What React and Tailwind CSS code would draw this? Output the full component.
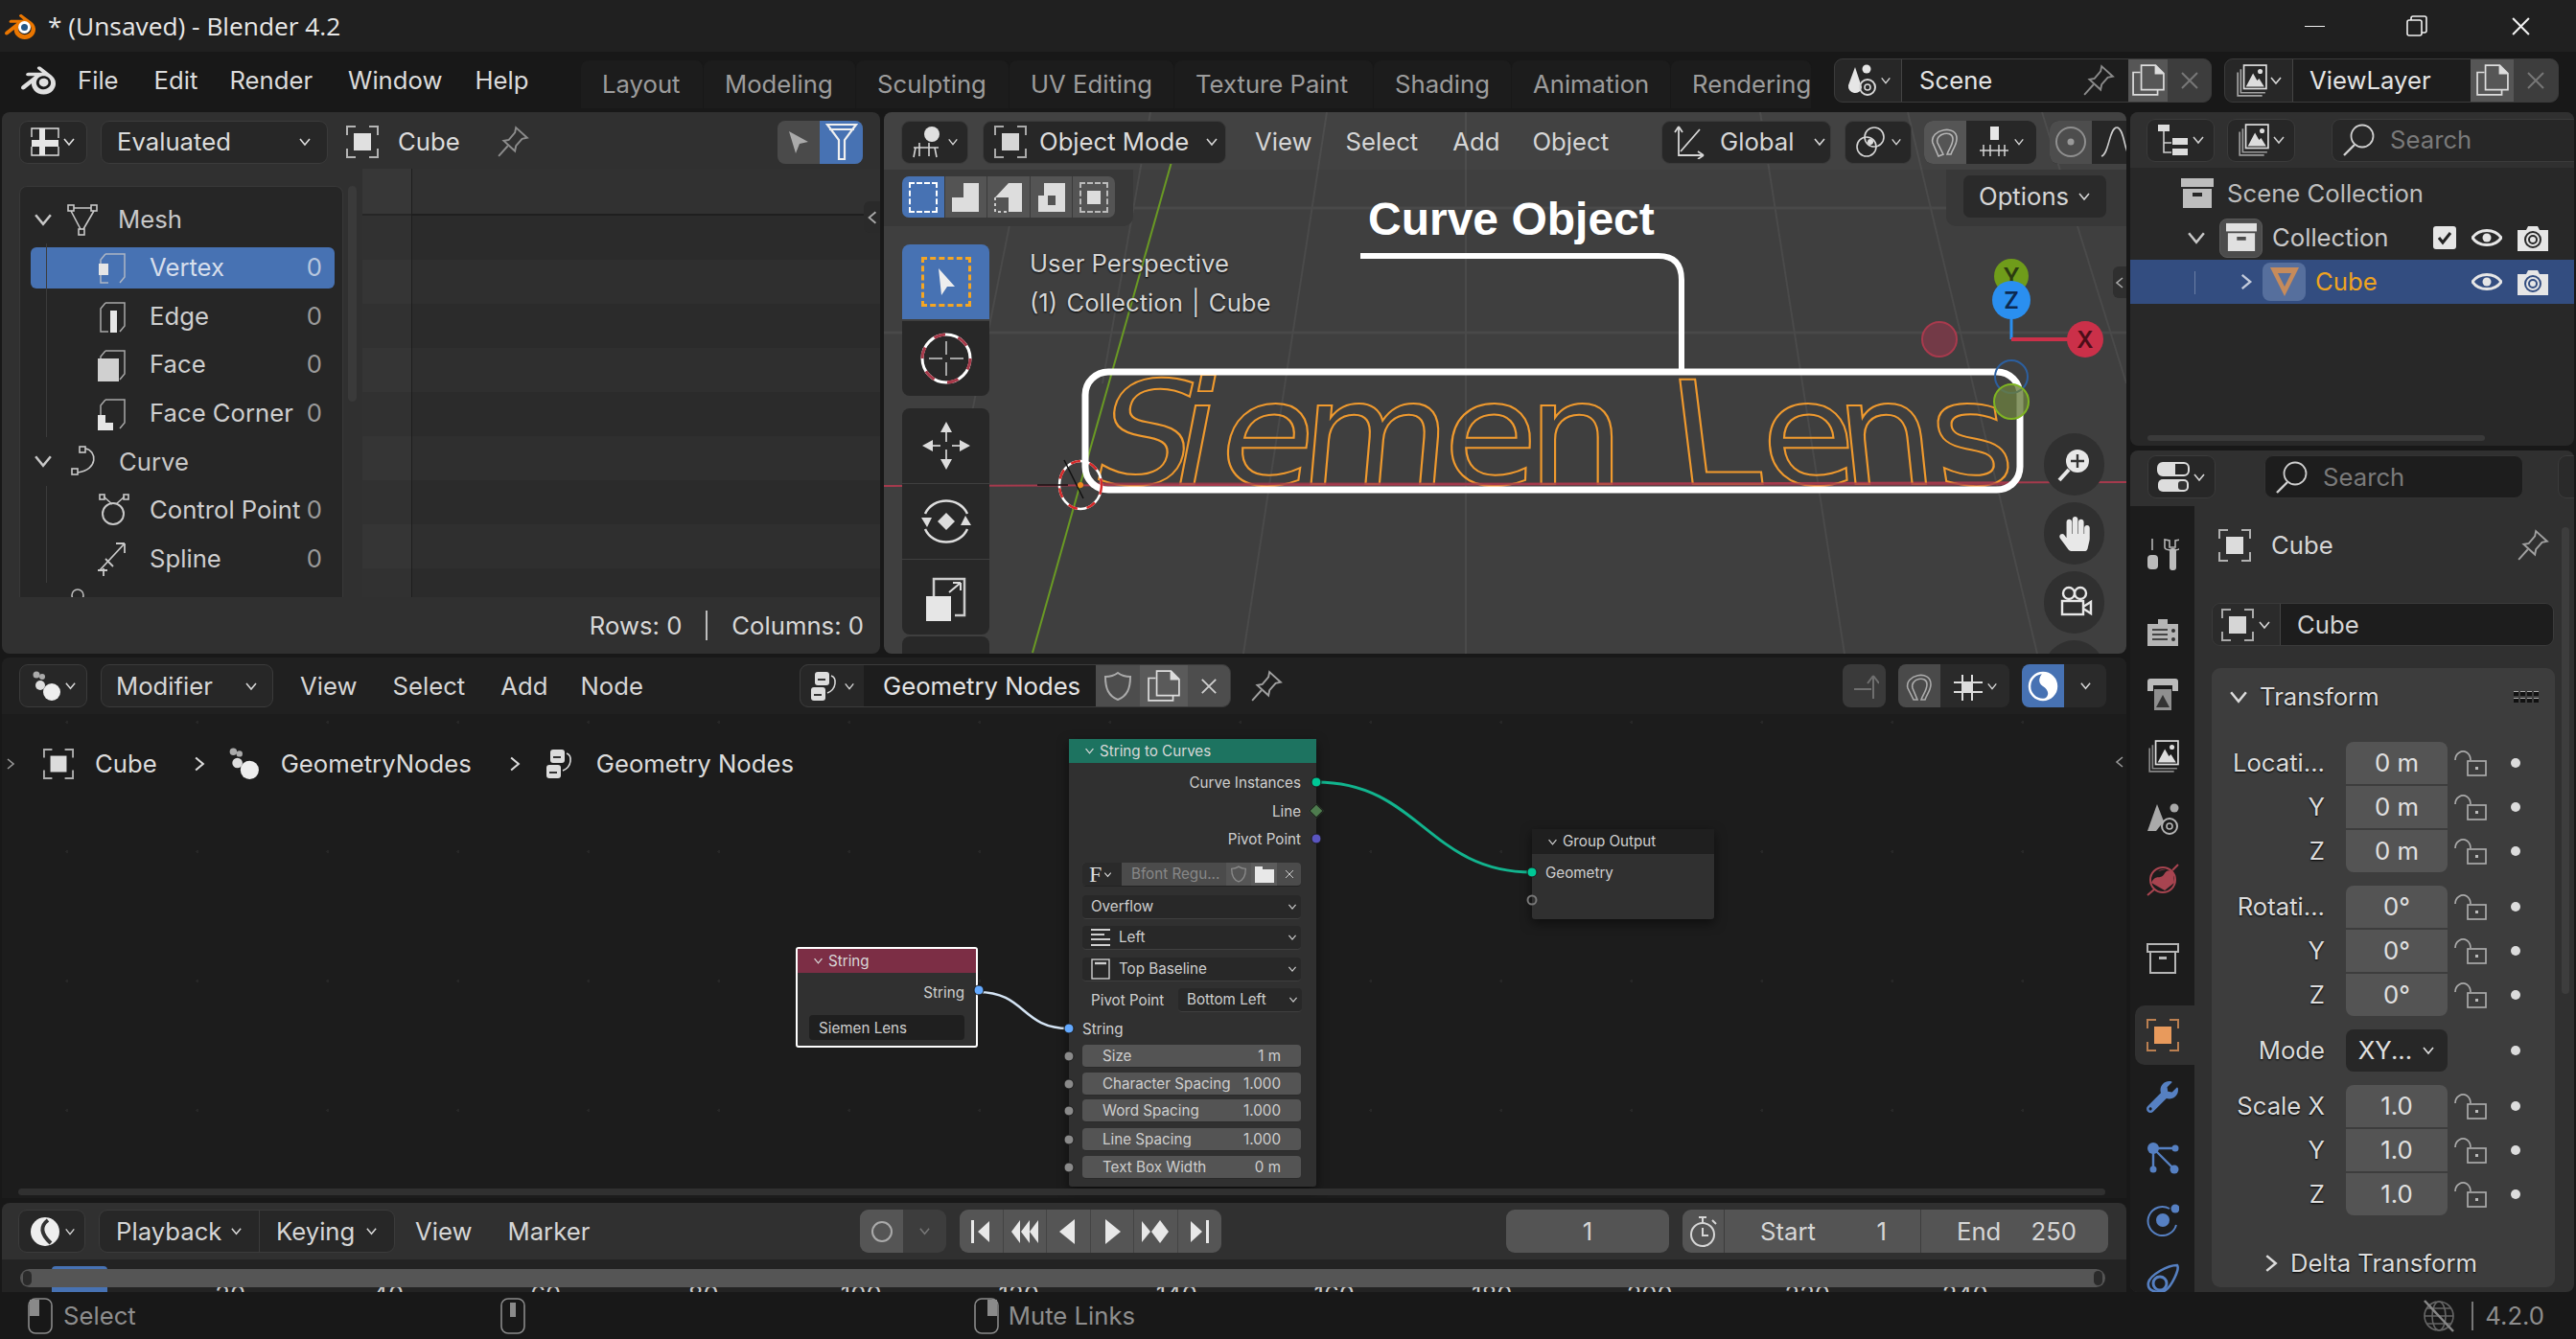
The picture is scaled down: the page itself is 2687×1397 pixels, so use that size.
import React from "react";
import { SiBlender } from "react-icons/si";
import { FaHandPaper, FaWrench } from "react-icons/fa";

const Chev = ({ dir = "down", s = 14, cls = "" }) => {
  const d = { down: "M2 4l5 6 5-6", right: "M4 2l6 5-6 5", left: "M10 2l-6 5 6 5" }[dir];
  return (
    <svg viewBox="0 0 14 14" width={s} height={s} className={"shrink-0 " + cls}>
      <path d={d} fill="none" stroke="currentColor" strokeWidth="1.6" />
    </svg>
  );
};

const I = ({ s = 32, w, h, children, cls = "", vb = "0 0 32 32" }) => (
  <svg viewBox={vb} width={w || s} height={h || s} className={"shrink-0 " + cls} fill="none" stroke="currentColor" strokeWidth="1.6">
    {children}
  </svg>
);

const ObjIcon = ({ s = 34, cls = "" }) => (
  <I s={s} vb="0 0 34 34" cls={cls}>
    <path d="M1 10V1h9M24 1h9v9M33 24v9h-9M10 33H1v-9" strokeWidth="2" opacity=".75" />
    <rect x="8" y="8" width="18" height="18" fill="currentColor" stroke="none" />
  </I>
);
const PinIcon = ({ s = 34, cls = "" }) => (
  <I s={s} cls={cls} vb="0 0 32 32">
    <path d="M19 2l11 10-5 1-6 7-1 5-11-10 5-1 6-7zM11 20L2 30" strokeWidth="1.8" />
  </I>
);
const SheetIcon = () => (
  <I s={30} vb="0 0 30 30">
    <path d="M1 10V1h28v10M1 20v9h28v-9" strokeWidth="1.4" />
    <rect x="1" y="13" width="28" height="7" fill="#e6e6e6" stroke="none" />
    <rect x="9" y="1" width="6" height="28" fill="#e6e6e6" stroke="none" />
  </I>
);
const Nodes3 = ({ s = 32 }) => (
  <I s={s}>
    <circle cx="6" cy="4" r="3.5" fill="#aaa" stroke="none" />
    <circle cx="12" cy="6" r="3" fill="#aaa" stroke="none" />
    <circle cx="10" cy="15" r="5" fill="#ddd" stroke="none" />
    <circle cx="22" cy="22" r="9" fill="#eee" stroke="none" />
  </I>
);
const NodeTree = () => (
  <I s={32}>
    <rect x="5" y="1" width="15" height="14" rx="3" fill="#ddd" stroke="none" />
    <rect x="1" y="17" width="15" height="14" rx="3" fill="#ddd" stroke="none" />
    <path d="M8 9h8M4 25h8" stroke="#333" strokeWidth="2" />
    <path d="M22 5c6 2 6 14-4 18" />
  </I>
);
const Picture = ({ s = 32 }) => (
  <I s={s}>
    <path d="M3 8v23h24M6 5v23h24" opacity=".7" />
    <rect x="9" y="1" width="22" height="23" stroke="#ddd" />
    <path d="M11 22l7-13 4 7 2-2 5 8z" fill="#ddd" stroke="none" />
    <circle cx="25" cy="7" r="2.4" fill="#ddd" stroke="none" />
  </I>
);
const CopyI = () => (
  <I s={34}>
    <path d="M8 8H1v22h24v-5" />
    <path d="M9 1h14l8 8v16H9z" fill="none" />
    <path d="M23 1v8h8" fill="currentColor" />
  </I>
);
const X = ({ s = 20, cls = "" }) => (
  <I s={s} vb="0 0 20 20" cls={cls}><path d="M2 2l16 16M18 2L2 18" strokeWidth="2" /></I>
);
const SearchI = ({ s = 34 }) => (
  <I s={s} vb="0 0 34 34">
    <circle cx="21" cy="13" r="11.5" strokeWidth="1.8" />
    <path d="M13 22L2 33" strokeWidth="2.4" />
  </I>
);
const Box = ({ s = 34, outline = false }) => (
  <I s={s} vb="0 0 34 32">
    {outline ? (
      <>
        <rect x="1" y="1" width="32" height="8" strokeWidth="2" />
        <path d="M4 9v22h26V9" strokeWidth="2" />
        <rect x="13" y="14" width="8" height="3" fill="currentColor" stroke="none" />
      </>
    ) : (
      <>
        <rect x="0" y="0" width="34" height="9" fill="currentColor" stroke="none" />
        <path fillRule="evenodd" d="M2 11h30v20H2zM12 15v4h10v-4z" fill="currentColor" stroke="none" />
      </>
    )}
  </I>
);
const Eye = () => (
  <I w={32} h={22} vb="0 0 32 22">
    <path d="M1 11C8 1 24 1 31 11 24 21 8 21 1 11z" strokeWidth="3" stroke="#e6e6e6" />
    <circle cx="16" cy="11" r="4.5" fill="#e6e6e6" stroke="none" />
  </I>
);
const Cam = ({ ring = "#282828" }) => (
  <I w={32} h={27} vb="0 0 32 27">
    <path d="M0 5h9l2-4h10l2 4h9v22H0z" fill="#e6e6e6" stroke="none" />
    <circle cx="16" cy="15" r="8" stroke={ring} strokeWidth="2" />
    <circle cx="16" cy="15" r="4" stroke={ring} strokeWidth="2" />
  </I>
);
const Lock = () => (
  <I w={34} h={27} vb="0 0 34 27">
    <path d="M1 10C1 3 8-1 13 2c3 2 4 4 4 8" stroke="#aaa" strokeWidth="1.7" />
    <rect x="14" y="11" width="19" height="15" stroke="#aaa" strokeWidth="1.7" />
    <rect x="22" y="17" width="3" height="3" fill="#bbb" stroke="none" />
  </I>
);
const MeshI = () => (
  <I s={34} vb="0 0 34 34">
    <rect x="2" y="2" width="6" height="6" />
    <rect x="26" y="2" width="6" height="6" />
    <rect x="13" y="27" width="6" height="6" />
    <path d="M8 5h18M5 8l10 19M29 8L18 27" />
  </I>
);
const CurveI = () => (
  <I s={32}>
    <rect x="9" y="1" width="6" height="6" />
    <rect x="1" y="24" width="6" height="6" />
    <path d="M15 3c12 2 14 22-8 25" />
  </I>
);
const Attr = ({ k }) => (
  <I s={36} vb="0 0 36 36" cls="text-[#c8c8c8]">
    {k === "ctrl" ? (
      <>
        <circle cx="18" cy="22" r="11" strokeWidth="2" />
        <path d="M8 4l9 8M30 4l-9 8" strokeWidth="1.5" />
        <rect x="4" y="2" width="5" height="5" />
        <rect x="29" y="2" width="5" height="5" />
      </>
    ) : k === "spline" ? (
      <path d="M4 30l26-28M30 2v10M30 2h-9M2 30h10M8 36v-8M10 18l8 8" strokeWidth="1.8" />
    ) : (
      <>
        <path d="M10 4h20v24l-5 6M10 4L5 10v24h8" strokeWidth="1.5" opacity=".8" />
        {k === "v" && <rect x="3" y="14" width="10" height="12" fill="#e6e6e6" stroke="none" />}
        {k === "e" && <rect x="15" y="12" width="7" height="23" fill="#e6e6e6" stroke="none" />}
        {k === "f" && <rect x="2" y="12" width="22" height="24" fill="#d0d0d0" stroke="none" />}
        {k === "c" && <path d="M2 20h8v8h8v8H2z" fill="#e6e6e6" stroke="none" />}
      </>
    )}
  </I>
);

const Btn = ({ children, cls = "" }) => (
  <div className={"flex shrink-0 items-center justify-center gap-[3px] h-[45px] rounded-[9px] bg-[#272727] border border-[#3b3b3b] " + cls}>{children}</div>
);

const Menu = ({ items, cls = "" }) => (
  <div className={"flex items-center shrink-0 " + cls}>
    {items.map(([t, ml]) => (
      <span key={t} style={{ marginLeft: ml }}>{t}</span>
    ))}
  </div>
);

const AttrRow = ({ k, label, n = "0", active }) => (
  <div className={"relative flex items-center h-[43px] mb-[7.6px] ml-[11px] w-[317px] rounded-[6px] " + (active ? "bg-[#4772b3]" : "")}>
    <div className="absolute left-[16px] -top-[4px] -bottom-[4px] w-px bg-[#3c3c3c]" />
    <div className="ml-[68px] w-[56px] shrink-0"><Attr k={k} /></div>
    <span className={"whitespace-nowrap " + (active ? "text-[#d6deec]" : "text-[#cfcfcf]")}>{label}</span>
    <span className={"ml-auto mr-[13px] " + (active ? "text-[#b8c7de]" : "text-[#9a9a9a]")}>{n}</span>
  </div>
);

function Spreadsheet() {
  return (
    <div className="w-[916px] h-[565px] rounded-[8px] bg-[#303030] flex flex-col overflow-hidden">
      <div className="h-[59px] flex items-center pl-[18px] pt-[3px] shrink-0">
        <Btn cls="w-[71px] text-[#e0e0e0]"><SheetIcon /><Chev s={14} /></Btn>
        <Btn cls="w-[237px] ml-[14px] !justify-between px-[16px] text-[#dcdcdc]"><span>Evaluated</span><Chev s={14} /></Btn>
        <ObjIcon cls="ml-[19px] text-[#e0e0e0]" />
        <span className="ml-[20px] text-[#dcdcdc]">Cube</span>
        <PinIcon cls="ml-[38px] text-[#8c8c8c]" />
        <div className="ml-auto mr-[18px] flex h-[45px] w-[89px] rounded-[8px] overflow-hidden bg-[#4a4a4a]">
          <div className="w-[44px] flex items-center justify-center">
            <I s={26} vb="0 0 26 26"><path d="M3 2l20 11-9 2-4 10z" fill="#aaa" stroke="none" /></I>
          </div>
          <div className="w-[45px] flex items-center justify-center bg-[#4772b3]">
            <I w={34} h={40} vb="0 0 34 40"><path d="M2 2h30L20 18v20h-6V18zM4 7h26" stroke="#f0f0f0" strokeWidth="2.2" /></I>
          </div>
        </div>
      </div>
      <div className="flex h-[447px] pl-[18px]">
        <div className="mt-[18px] w-[338px] shrink-0 rounded-t-[8px] bg-[#262626] border border-[#383838] border-b-0 overflow-hidden pt-[12px]">
          <div className="flex items-center h-[43px] mb-[7.6px] pl-[13px] text-[#c8c8c8]"><Chev s={22} /><span className="ml-[13px]"><MeshI /></span><span className="ml-[20px]">Mesh</span></div>
          <AttrRow k="v" label="Vertex" active />
          <AttrRow k="e" label="Edge" />
          <AttrRow k="f" label="Face" />
          <AttrRow k="c" label="Face Corner" />
          <div className="flex items-center h-[43px] mb-[7.6px] pl-[13px] text-[#c8c8c8]"><Chev s={22} /><span className="ml-[18px]"><CurveI /></span><span className="ml-[18px]">Curve</span></div>
          <AttrRow k="ctrl" label="Control Point" />
          <AttrRow k="spline" label="Spline" />
          <div className="ml-[52px] text-[#bbb]"><I s={16} vb="0 0 16 16"><circle cx="8" cy="9" r="6" /></I></div>
        </div>
        <div className="ml-[5px] mt-[18px] w-[9px] h-[225px] rounded-full bg-[#3a3a3a] shrink-0" />
        <div className="ml-[6px] flex-1 relative flex flex-col overflow-hidden">
          <div className="h-[49px] bg-[#313131] border-b-2 border-[#1f1f1f] shrink-0" />
          {[0, 1, 2, 3, 4, 5, 6, 7, 8].map((i) => (
            <div key={i} className={"h-[46px] shrink-0 " + (i % 2 ? "bg-[#2f2f2f]" : "bg-[#2b2b2b]")} />
          ))}
          <div className="absolute left-0 top-0 bottom-0 w-[52px] bg-[#ffffff08] border-r border-[#1e1e1e]" />
          <div className="absolute right-0 top-[34px] w-[17px] h-[33px] rounded-l-[6px] bg-[#2a2a2a] flex items-center justify-center text-[#aaa]"><Chev dir="left" s={16} /></div>
        </div>
      </div>
      <div className="h-[59px] flex items-center justify-end pr-[17px] text-[#d8d8d8] shrink-0">
        <span>Rows: 0</span>
        <div className="mx-[25px] w-[2px] h-[31px] bg-[#bcbcbc]" />
        <span>Columns: 0</span>
      </div>
    </div>
  );
}

const ToolBtn = ({ children, active, cls = "" }) => (
  <div className={"relative w-[91px] h-[78px] flex items-center justify-center " + (active ? "bg-[#4772b3] " : "bg-[#282828] ") + cls}>{children}</div>
);

const letters = [
  ["S", 1134, -13], ["i", 1216, -11], ["e", 1267, -8], ["m", 1353, -5], ["e", 1504, -2], ["n", 1593, 0],
  ["L", 1750, 7], ["e", 1840, 4], ["n", 1921, 6], ["s", 2022, 9],
];

const NavBtn = ({ children, cls = "" }) => (
  <div className={"w-[63px] h-[65px] rounded-full bg-[#303030] flex items-center justify-center text-[#e8e8e8] " + cls}>{children}</div>
);

function Viewport() {
  return (
    <div className="relative w-[1296px] h-[565px] rounded-[8px] bg-[#3f3f3f] overflow-hidden text-[#d6d6d6]">
      <svg viewBox="922 117 1296 565" className="absolute inset-0 w-full h-full">
        <g stroke="#4a4a4a" strokeWidth="2" fill="none">
          <path d="M922 217L2218 217M922 347L2218 347" stroke="#494949" strokeWidth="3" />
          <path d="M1529 117L1529 682M1836 117L1924 682M1990 117L2125 682M1384 117L1297 682M1060 200L1000 500M1200 117L1150 400M2130 117L2218 400" />
        </g>
        <path d="M922 507L2218 503" stroke="#a53a4d" strokeWidth="2" />
        <path d="M1222 169L1077 681" stroke="#6a9a24" strokeWidth="2" />
        {letters.map(([c, x, a], i) => (
          <text key={i} transform={`translate(${x} 505) skewX(${a}) scale(1.07 1)`} fontFamily="'DejaVu Sans',sans-serif" fontSize="150" fill="none" stroke="#f09a2e" strokeWidth="2">{c}</text>
        ))}
        <path d="M1140 505H2100" stroke="#a53a4d" strokeWidth="3" opacity=".8" />
        <rect x="1132" y="388" width="975" height="123" rx="24" fill="none" stroke="#fff" strokeWidth="7" />
        <path d="M1419 267H1730Q1754 267 1754 292V387" fill="none" stroke="#fff" strokeWidth="6" />
        <ellipse cx="1127" cy="506" rx="22" ry="25" fill="none" stroke="#fff" strokeWidth="2.5" />
        <ellipse cx="1127" cy="506" rx="22" ry="25" fill="none" stroke="#d62828" strokeWidth="2.5" strokeDasharray="10 10" />
        <path d="M1082 506h32M1110 480l20 40" stroke="#111" strokeWidth="1.5" />
        <circle cx="1127" cy="506" r="3" fill="#ee8a20" />
        <path d="M2098 330V354" stroke="#2a8ff0" strokeWidth="3" />
        <path d="M2098 354H2170" stroke="#cb3049" strokeWidth="4" />
        <ellipse cx="2098" cy="288" rx="18" ry="18" fill="#6f9c1a" />
        <text x="2098" y="297" textAnchor="middle" fontFamily="Inter" fontSize="24" fontWeight="600" fill="#2b3a10">Y</text>
        <circle cx="2098" cy="313" r="20" fill="#2a8ff0" />
        <text x="2098" y="322" textAnchor="middle" fontFamily="Inter" fontSize="24" fontWeight="600" fill="#0c2a52">Z</text>
        <circle cx="2175" cy="354" r="19" fill="#cb3049" />
        <text x="2175" y="363" textAnchor="middle" fontFamily="Inter" fontSize="24" fontWeight="600" fill="#4b0d18">X</text>
        <circle cx="2023" cy="354" r="18" fill="#733a47" stroke="#a93a4d" strokeWidth="2" />
        <circle cx="2098" cy="393" r="17" fill="none" stroke="#2c5f9f" strokeWidth="2" />
        <circle cx="2098" cy="419" r="18" fill="#6a7d40" fillOpacity=".8" stroke="#7fb522" strokeWidth="2" />
      </svg>

      <div className="relative flex items-center h-[60px] pl-[18px] pt-[2px] bg-[#ffffff05]">
        <Btn cls="w-[70px]">
          <I s={34} vb="0 0 34 34"><circle cx="21" cy="9" r="8" fill="#e0e0e0" stroke="none" /><path d="M2 23h26M4 23l-2 10M24 23l2 10M8 18v14M18 18v14" /></I><Chev s={12} />
        </Btn>
        <Btn cls="w-[254px] ml-[15px] !justify-start pl-[11px] gap-[13px]">
          <ObjIcon s={34} /><span className="whitespace-nowrap text-[#dcdcdc]">Object Mode</span><Chev s={14} cls="ml-[4px]" />
        </Btn>
        <Menu cls="ml-[30px] w-[424px]" items={[["View", 0], ["Select", 35], ["Add", 36], ["Object", 34]]} />
        <Btn cls="w-[177px] !justify-start pl-[10px] gap-[14px]">
          <I s={36} vb="0 0 36 36"><path d="M7 2v30h26M7 2L3 8M7 2l4 6M29 5L9 28M33 32l-6-4M33 32l-6 4" strokeWidth="1.8" /></I><span>Global</span><Chev s={14} cls="ml-[6px]" />
        </Btn>
        <Btn cls="w-[70px] ml-[14px]">
          <I s={34} vb="0 0 34 34"><circle cx="20" cy="12" r="10" /><circle cx="12" cy="22" r="10" /><circle cx="16" cy="17" r="3" fill="#e0e0e0" stroke="none" /></I><Chev s={12} />
        </Btn>
        <div className="ml-[13px] flex w-[117px] h-[45px] rounded-[9px] overflow-hidden bg-[#272727] shrink-0">
          <div className="w-[44px] bg-[#555] flex items-center justify-center text-[#b5b5b5]"><I s={34} vb="0 0 34 34"><path d="M10 32L4 18C0 4 30-2 29 14c0 6-4 10-6 16h-4c2-6 6-10 6-16C25 4 6 8 9 18l6 12z" strokeWidth="1.6" /></I></div>
          <div className="flex-1 flex items-center justify-center gap-[3px]"><I s={34} vb="0 0 34 34"><rect x="13" y="1" width="9" height="14" fill="#e6e6e6" stroke="none" /><path d="M2 26h30M6 20v12M13 20v12M22 20v12M28 20v12" strokeWidth="1.5" /></I><Chev s={12} /></div>
        </div>
        <div className="ml-[14px] flex w-[100px] h-[45px] rounded-[9px] overflow-hidden shrink-0 bg-[#272727]">
          <div className="w-[44px] bg-[#4d4d4d] flex items-center justify-center text-[#8f8f8f]"><I s={34} vb="0 0 34 34"><circle cx="17" cy="17" r="15" strokeWidth="2" /><circle cx="17" cy="17" r="3.5" fill="#999" stroke="none" /></I></div>
          <div className="flex-1 flex items-center pl-[6px] text-[#ccc]"><I s={34} vb="0 0 34 34"><path d="M4 32C12 30 12 2 20 2s8 28 14 30" /></I></div>
        </div>
      </div>

      <div className="absolute left-0 top-[60px] w-[260px] h-[59px] rounded-br-[10px] bg-[#383838]" />
      <div className="absolute right-0 top-[60px] w-[188px] h-[59px] rounded-bl-[10px] bg-[#383838]" />
      <div className="absolute left-[19px] top-[67px] flex h-[43px] w-[222px] rounded-[7px] overflow-hidden gap-px bg-[#3a3a3a]">
        <div className="flex-1 bg-[#4772b3] flex items-center justify-center"><div className="w-[30px] h-[32px] border-2 border-dashed border-white" /></div>
        <div className="flex-1 bg-[#545454] flex items-center justify-center"><I s={32}><path d="M2 31V16h12V1h16v30z" fill="#ddd" stroke="none" /></I></div>
        <div className="flex-1 bg-[#545454] flex items-center justify-center"><I s={32}><path d="M16 1h14v30H16V16H2" fill="#ddd" stroke="none" /><path d="M2 16v15h14" strokeDasharray="3 3" strokeWidth="2" stroke="#ccc" /></I></div>
        <div className="flex-1 bg-[#545454] flex items-center justify-center"><I s={32}><path fillRule="evenodd" d="M8 1h22v30H2V14h6zM12 14v10h8V14z" fill="#ddd" stroke="none" /></I></div>
        <div className="flex-1 bg-[#545454] flex items-center justify-center"><div className="w-[30px] h-[32px] border-2 border-dashed border-[#bbb] flex items-center justify-center"><div className="w-[14px] h-[14px] bg-[#ddd]" /></div></div>
      </div>
      <div className="absolute right-[21px] top-[66px] w-[149px] h-[44px] rounded-[7px] bg-[#2a2a2a] flex items-center justify-between px-[16px]"><span>Options</span><Chev s={14} /></div>

      <div className="absolute left-[19px] top-[138px] flex flex-col items-center">
        <ToolBtn active cls="rounded-t-[8px]">
          <div className="w-[52px] h-[52px] border-[3px] border-dashed border-[#f5a623] flex items-center justify-center"><I w={22} h={30} vb="0 0 22 30"><path d="M3 1l17 19-8 0-6 9z" fill="#eee" stroke="none" /></I></div>
        </ToolBtn>
        <ToolBtn cls="rounded-b-[8px] mt-[2px]">
          <I s={56} vb="0 0 56 56"><circle cx="28" cy="28" r="25" stroke="#fff" strokeWidth="3" /><circle cx="28" cy="28" r="25" stroke="#a83a4a" strokeWidth="3" strokeDasharray="12 14" /><path d="M28 10v14M28 32v14M10 28h14M32 28h14" stroke="#ccc" strokeWidth="1.5" /></I>
        </ToolBtn>
        <ToolBtn cls="rounded-t-[8px] mt-[13px]">
          <I s={54} vb="0 0 54 54"><path d="M27 2l6 11H21zM27 52l6-11H21zM2 27l11-6v12zM52 27l-11-6v12z" fill="#ddd" stroke="none" /><path d="M27 13v10M27 31v10M13 27h8M33 27h8" stroke="#bbb" strokeWidth="2" /></I>
        </ToolBtn>
        <ToolBtn cls="mt-px">
          <I s={56} vb="0 0 56 56"><path d="M6 20C14 2 42 2 50 20M50 36C42 54 14 54 6 36" stroke="#ddd" strokeWidth="2.5" /><path d="M28 19l9 9-9 9-9-9z" fill="#ddd" stroke="none" /><path d="M2 24h11l-5 10zM54 32H43l5-10z" fill="#ddd" stroke="none" /></I>
        </ToolBtn>
        <ToolBtn cls="mt-px rounded-b-[8px]">
          <I s={50} vb="0 0 50 50"><path d="M12 24V6h32v38H34" stroke="#ccc" strokeWidth="2.5" /><rect x="4" y="24" width="26" height="26" fill="#e6e6e6" stroke="none" /><path d="M28 20l12-10M40 10v8M40 10h-8" stroke="#ddd" strokeWidth="2" /></I>
        </ToolBtn>
        <ToolBtn cls="mt-[2px] rounded-t-[8px] !h-[30px]" />
      </div>

      <div className="absolute left-[152px] top-[141px] leading-[34px] [text-shadow:0_1px_2px_#000] whitespace-nowrap">User Perspective</div>
      <div className="absolute left-[152px] top-[182px] leading-[34px] [text-shadow:0_1px_2px_#000] whitespace-nowrap [word-spacing:2px]">(1) Collection | Cube</div>
      <div className="absolute left-[505px] top-[84px] text-[48px] leading-[56px] font-bold text-white font-['Liberation_Sans',sans-serif] whitespace-nowrap">Curve Object</div>

      <div className="absolute right-0 top-[161px] w-[14px] h-[33px] rounded-l-[6px] bg-[#2f2f2f] flex items-center justify-center text-[#aaa]"><Chev dir="left" s={14} /></div>

      <div className="absolute left-[1210px] top-[335px] flex flex-col gap-[7px]">
        <NavBtn><I s={36} vb="0 0 36 36"><circle cx="21" cy="14" r="12" fill="#e8e8e8" stroke="none" /><path d="M21 7v14M14 14h14" stroke="#333" strokeWidth="2.4" /><path d="M12 23L2 34" strokeWidth="4" stroke="#e8e8e8" /></I></NavBtn>
        <NavBtn><FaHandPaper size={36} /></NavBtn>
        <NavBtn><I s={40} vb="0 0 40 40"><circle cx="14" cy="10" r="6" strokeWidth="2.4" /><circle cx="26" cy="10" r="6" strokeWidth="2.4" /><rect x="7" y="18" width="22" height="14" strokeWidth="2.4" /><path d="M29 24l8-5v12l-8-5" strokeWidth="2.4" /></I></NavBtn>
        <NavBtn />
      </div>
    </div>
  );
}

const Sock = ({ c, x, y, hollow, diamond }) => (
  <div
    className={"absolute w-[11px] h-[11px] -translate-x-1/2 -translate-y-1/2 " + (diamond ? "rotate-45 " : "rounded-full ")}
    style={{ left: x, top: y, background: hollow ? "transparent" : c, border: hollow ? "2px solid #777" : "1px solid #1b1b1b" }}
  />
);

const NodeRowField = ({ label, v, top }) => (
  <div className="absolute left-[14px] w-[228px] h-[24px] rounded-[4px] bg-[#545454] border-b border-[#2a2a2a] flex items-center justify-between px-[21px] text-[#cfcfcf] whitespace-nowrap" style={{ top }}>
    <span>{label}</span><span>{v}</span>
  </div>
);

const NodeDrop = ({ top, left = 14, w = 228, children }) => (
  <div className="absolute h-[25px] rounded-[4px] bg-[#282828] border-b border-[#3f3f3f] flex items-center justify-between pl-[9px] pr-[4px] text-[#cfcfcf] whitespace-nowrap" style={{ top, left, width: w }}>
    <span className="flex items-center gap-[9px]">{children}</span><Chev s={10} />
  </div>
);

function NodeEditor() {
  return (
    <div className="relative w-[2216px] h-[564px] mt-[4px] bg-[#1c1c1c] rounded-t-[8px] overflow-hidden text-[#d6d6d6] bg-[radial-gradient(#272727_1.5px,transparent_1.5px)] bg-[size:136px_135px]">
      <div className="relative flex items-center h-[59px] bg-[#202020] pl-[18px]">
        <Btn cls="w-[71px]"><Nodes3 /><Chev s={13} /></Btn>
        <Btn cls="w-[180px] ml-[14px] !justify-between px-[15px]"><span>Modifier</span><Chev s={14} /></Btn>
        <Menu cls="ml-[28px] w-[521px]" items={[["View", 0], ["Select", 37], ["Add", 37], ["Node", 34]]} />
        <div className="flex shrink-0 h-[45px] rounded-[9px] overflow-hidden bg-[#4d4d4d] border border-[#3b3b3b]">
          <div className="w-[66px] flex items-center justify-center gap-[3px] bg-[#272727]"><NodeTree /><Chev s={12} /></div>
          <div className="w-[242px] bg-[#1d1d1d] flex items-center pl-[20px] text-[#e4e4e4] whitespace-nowrap">Geometry Nodes</div>
          <div className="w-[46px] flex items-center justify-center text-[#aaa]"><I s={32}><path d="M16 2c4 3 8 4 13 4 0 12-3 20-13 24C6 26 3 18 3 6c5 0 9-1 13-4z" strokeWidth="2" /></I></div>
          <div className="w-[50px] flex items-center justify-center bg-[#5a5a5a] text-[#ddd]"><CopyI /></div>
          <div className="w-[44px] flex items-center justify-center text-[#d0d0d0]"><X s={18} /></div>
        </div>
        <PinIcon cls="ml-[20px] text-[#a0a0a0]" />
        <div className="ml-[584px] flex items-center shrink-0">
          <div className="w-[45px] h-[45px] rounded-[8px] bg-[#3a3a3a] flex items-center justify-center text-[#6f6f6f]"><I s={30} vb="0 0 30 30"><path d="M24 28V4M24 4l-6 8M24 4l6 8M4 18h18" strokeWidth="2" /></I></div>
          <div className="ml-[13px] w-[44px] h-[45px] rounded-l-[8px] bg-[#4a4a4a] flex items-center justify-center text-[#ababab]"><I s={32}><path d="M10 30L4 18C0 4 28-2 28 14c0 6-4 10-6 16h-4c2-6 6-10 6-16C24 4 6 8 9 18l5 12z" /></I></div>
          <div className="w-[72px] h-[45px] rounded-r-[8px] bg-[#2a2a2a] flex items-center justify-center gap-[3px]"><I s={32}><path d="M1 12h30M1 22h30M10 4v27M20 4v27" stroke="#ddd" strokeWidth="2" /><rect x="9" y="11" width="12" height="12" fill="#ddd" stroke="none" /></I><Chev s={12} /></div>
          <div className="ml-[13px] w-[44px] h-[45px] rounded-l-[8px] bg-[#4772b3] flex items-center justify-center"><I s={34} vb="0 0 34 34"><circle cx="17" cy="17" r="14" stroke="#fff" strokeWidth="2.5" /><path d="M17 3a14 14 0 0 1 0 28c8-4 6-10 0-14-6-4-4-10 0-14z" fill="#fff" stroke="none" /></I></div>
          <div className="w-[44px] h-[45px] rounded-r-[8px] bg-[#2a2a2a] flex items-center justify-center"><Chev s={13} /></div>
        </div>
      </div>

      <div className="absolute top-[95px] left-0 h-[32px] flex items-center text-[#dcdcdc] whitespace-nowrap">
        <Chev dir="right" s={14} cls="ml-[2px] text-[#999]" />
        <ObjIcon s={32} cls="ml-[27px]" />
        <span className="ml-[22px]">Cube</span>
        <Chev dir="right" s={18} cls="ml-[35px]" />
        <span className="ml-[20px]"><Nodes3 s={34} /></span>
        <span className="ml-[22px]">GeometryNodes</span>
        <Chev dir="right" s={18} cls="ml-[36px]" />
        <span className="ml-[23px]"><NodeTree /></span>
        <span className="ml-[21px]">Geometry Nodes</span>
      </div>
      <div className="absolute left-[2202px] top-[102px] text-[#999]"><Chev dir="left" s={14} /></div>

      <svg viewBox="2 686 2216 564" className="absolute inset-0 w-full h-full pointer-events-none">
        <path d="M1373 816C1480 816 1490 910 1598 910" fill="none" stroke="#12b48e" strokeWidth="3" />
        <path d="M1020 1035C1070 1035 1065 1073 1115 1073" fill="none" stroke="#d4e4f4" strokeWidth="2.5" />
      </svg>

      {/* String node */}
      <div className="absolute left-[828px] top-[302px] w-[190px] h-[105px] rounded-[3px] border-2 border-white bg-[#303030] text-[15.2px] leading-none overflow-visible">
        <div className="h-[25px] bg-[#7c2e45] flex items-center pl-[16px] gap-[5px] text-[#d8d8d8]"><Chev s={11} /><span>String</span></div>
        <div className="text-right pr-[12px] mt-[13px] text-[#cfcfcf]">String</div>
        <div className="mx-[12px] mt-[16px] h-[26px] rounded-[4px] bg-[#1f1f1f] flex items-center pl-[10px] text-[#cfcfcf]">Siemen Lens</div>
        <Sock c="#63a9ff" x={189} y={43} />
      </div>

      {/* String to Curves */}
      <div className="absolute left-[1113px] top-[85px] w-[258px] h-[467px] rounded-[3px] bg-[#303030] text-[15.2px] leading-none shadow-[0_4px_12px_#0008]">
        <div className="h-[25px] bg-[#1d7360] flex items-center pl-[16px] gap-[5px] text-[#d8d8d8]"><Chev s={11} /><span>String to Curves</span></div>
        <div className="absolute right-[16px] top-[38px] text-[#cfcfcf] whitespace-nowrap">Curve Instances</div>
        <div className="absolute right-[16px] top-[68px] text-[#cfcfcf]">Line</div>
        <div className="absolute right-[16px] top-[97px] text-[#cfcfcf] whitespace-nowrap">Pivot Point</div>
        <Sock c="#00c896" x={258} y={45} />
        <Sock c="#4e7c4e" x={258} y={75} diamond />
        <Sock c="#5a55c0" x={258} y={104} />
        <div className="absolute left-[14px] top-[129px] w-[228px] h-[25px] rounded-[4px] bg-[#4b4b4b] flex items-center overflow-hidden text-[#888] border-b border-[#222]">
          <div className="w-[41px] h-full bg-[#2a2a2a] flex items-center pl-[7px] gap-[2px] text-[#ddd]"><span className="font-['Liberation_Serif',serif] text-[24px]">F</span><Chev s={9} /></div>
          <div className="w-[109px] pl-[10px] whitespace-nowrap">Bfont Regu...</div>
          <div className="w-[26px] h-full flex items-center justify-center bg-[#555]"><I s={18} vb="0 0 32 32"><path d="M16 2c4 3 8 4 13 4 0 12-3 20-13 24C6 26 3 18 3 6c5 0 9-1 13-4z" strokeWidth="2.5" /></I></div>
          <div className="w-[27px] h-full flex items-center justify-center bg-[#5c5c5c] text-[#e8e8e8]"><I s={20} vb="0 0 20 20"><path d="M0 2h8v3h12v14H0z" fill="currentColor" stroke="none" /></I></div>
          <div className="flex-1 h-full flex items-center justify-center text-[#ccc]"><X s={10} /></div>
        </div>
        <NodeDrop top={163}>Overflow</NodeDrop>
        <NodeDrop top={195}><I w={20} h={20} vb="0 0 20 20"><path d="M0 2h20M0 7h14M0 12h20M0 18h20" strokeWidth="2" /></I>Left</NodeDrop>
        <NodeDrop top={228}><I w={20} h={22} vb="0 0 20 22"><rect x="1" y="1" width="18" height="20" strokeWidth="1.4" /><path d="M4 5h12" strokeWidth="2.4" /></I>Top Baseline</NodeDrop>
        <div className="absolute left-[23px] top-[253px] text-[#cfcfcf] leading-[40px] whitespace-nowrap">Pivot Point</div>
        <NodeDrop top={260} left={114} w={129}>Bottom Left</NodeDrop>
        <div className="absolute left-[14px] top-[295px] text-[#cfcfcf]">String</div>
        <Sock c="#63a9ff" x={0} y={302} />
        <NodeRowField label="Size" v="1 m" top={319} />
        <NodeRowField label="Character Spacing" v="1.000" top={348} />
        <NodeRowField label="Word Spacing" v="1.000" top={376} />
        <NodeRowField label="Line Spacing" v="1.000" top={406} />
        <NodeRowField label="Text Box Width" v="0 m" top={435} />
        {[331, 360, 388, 418, 447].map((y) => <Sock key={y} c="#8a8a8a" x={0} y={y} />)}
      </div>

      {/* Group Output */}
      <div className="absolute left-[1596px] top-[179px] w-[190px] h-[94px] rounded-[3px] bg-[#303030] text-[15.2px] leading-none shadow-[0_4px_12px_#0008]">
        <div className="h-[26px] bg-[#1f1f1f] flex items-center pl-[16px] gap-[5px] text-[#d0d0d0]"><Chev s={11} /><span>Group Output</span></div>
        <div className="pl-[14px] mt-[12px] text-[#cfcfcf]">Geometry</div>
        <Sock c="#00c896" x={0} y={45} />
        <Sock hollow x={0} y={74} />
      </div>

      <div className="absolute left-[17px] top-[554px] w-[2177px] h-[7px] rounded-full bg-[#303030]" />
    </div>
  );
}

const Transport = ({ d }) => (
  <div className="w-[45.5px] h-full flex items-center justify-center border-r border-[#444] last:border-0">
    <I s={30} vb="0 0 30 30"><path d={d} fill="#e8e8e8" stroke="none" /></I>
  </div>
);

function Timeline() {
  return (
    <div className="mt-[5px] w-[2216px] h-[93px] flex flex-col text-[#d6d6d6] overflow-hidden">
      <div className="h-[59px] bg-[#303030] rounded-t-[8px] flex items-center pl-[17px] shrink-0">
        <Btn cls="w-[70px]"><I s={34} vb="0 0 34 34"><circle cx="17" cy="17" r="15" fill="#eee" stroke="none" /><path d="M20 5c-8 6-8 14 3 24" stroke="#333" strokeWidth="4" /></I><Chev s={12} /></Btn>
        <div className="ml-[14px] flex shrink-0 h-[45px] rounded-[9px] bg-[#272727] border border-[#3b3b3b] overflow-hidden">
          <div className="w-[167px] flex items-center justify-between px-[17px] border-r border-[#3b3b3b]"><span>Playback</span><Chev s={13} /></div>
          <div className="w-[140px] flex items-center justify-between px-[17px]"><span>Keying</span><Chev s={13} /></div>
        </div>
        <Menu cls="ml-[21px] w-[464px]" items={[["View", 0], ["Marker", 37]]} />
        <div className="flex shrink-0 h-[45px] w-[90px] rounded-[9px] overflow-hidden bg-[#3d3d3d]">
          <div className="w-[45px] bg-[#555] flex items-center justify-center"><I s={26} vb="0 0 26 26"><circle cx="13" cy="13" r="10" stroke="#aaa" strokeWidth="2" /></I></div>
          <div className="flex-1 flex items-center justify-center text-[#777]"><Chev s={13} /></div>
        </div>
        <div className="ml-[14px] flex shrink-0 h-[45px] w-[273px] rounded-[9px] overflow-hidden bg-[#555]">
          <Transport d="M5 3h3v24H5zM24 4L12 15l12 11z" />
          <Transport d="M10 3L1 15l9 12zM20 3l-9 12 9 12zM29 3L20 15l9 12z" />
          <Transport d="M22 2L6 15l16 13z" />
          <Transport d="M8 2l16 13L8 28z" />
          <Transport d="M1 4l9 11-9 11zM20 3l-9 12 9 12 9-12z" />
          <Transport d="M6 4l12 11L6 26zM22 3h3v24h-3z" />
        </div>
        <div className="ml-[297px] flex shrink-0 items-center justify-center h-[45px] w-[170px] rounded-[9px] bg-[#545454]">1</div>
        <div className="ml-[14px] flex shrink-0 h-[45px] w-[444px] rounded-[9px] overflow-hidden bg-[#545454]">
          <div className="w-[44px] flex items-center justify-center border-r border-[#3d3d3d]"><I s={34} vb="0 0 34 34"><circle cx="16" cy="20" r="12" strokeWidth="2" /><path d="M12 2h8M16 2v6M16 13v8h6M26 5l4 4" strokeWidth="2" /></I></div>
          <div className="w-[205px] flex items-center justify-between pl-[37px] pr-[35px] border-r border-[#3d3d3d]"><span>Start</span><span>1</span></div>
          <div className="flex-1 flex items-center justify-between pl-[37px] pr-[33px]"><span>End</span><span>250</span></div>
        </div>
      </div>
      <div className="relative h-[34px] bg-[#232323]">
        <div className="absolute left-[52px] top-[7px] w-[58px] h-[27px] rounded-t-[4px] bg-[#4772b3]" />
        <div className="absolute left-0 top-[25px] pl-[156px] flex leading-[24px] text-[#c9c9c9]">
          {[20, 40, 60, 80, 100, 120, 140, 160, 180, 200, 220, 240].map((n) => (
            <span key={n} className="w-[164.5px] text-center">{n}</span>
          ))}
        </div>
        <div className="absolute left-[19px] top-[10px] w-[2175px] h-[19px] rounded-full bg-[#555] flex items-center justify-between px-[3px]">
          <div className="w-[9px] h-[15px] rounded-full bg-[#2a2a2a]" />
          <div className="w-[9px] h-[15px] rounded-full bg-[#2a2a2a]" />
        </div>
      </div>
    </div>
  );
}

const Mouse = ({ part }) => (
  <I w={26} h={38} vb="0 0 26 38">
    <rect x="1" y="1" width="24" height="36" rx="7" stroke="#8a8a8a" strokeWidth="1.6" />
    {part === "l" && <path d="M2 2h10v17H2z" fill="#8a8a8a" stroke="none" />}
    {part === "r" && <path d="M14 2h10v17H14z" fill="#8a8a8a" stroke="none" />}
    {part === "m" && <rect x="10" y="5" width="6" height="15" fill="#8a8a8a" stroke="none" />}
  </I>
);

const SideIcon = ({ children, active }) => (
  <div className={"flex shrink-0 items-center justify-center h-[62px] " + (active ? "ml-[5px] rounded-l-[10px] bg-[#303030]" : "")}>{children}</div>
);

const PRow = ({ label, value, pos = "mid", mt = 0, dropdown }) => (
  <div className="flex items-center h-[44px]" style={{ marginTop: mt }}>
    <div className="w-[118px] text-right text-[#dcdcdc] [text-shadow:0_1px_2px_#000] whitespace-nowrap">{label}</div>
    {dropdown ? (
      <div className="ml-[22px] w-[106px] h-[44px] rounded-[8px] bg-[#272727] flex items-center justify-center gap-[10px] text-[#e0e0e0]">XY... <Chev s={14} /></div>
    ) : (
      <div className={"ml-[22px] w-[106px] h-[44px] bg-[#545454] flex items-center justify-center text-[#e0e0e0] " + (pos === "top" ? "rounded-t-[8px]" : pos === "bot" ? "rounded-b-[8px]" : "")}>{value}</div>
    )}
    <div className="ml-[7px] w-[34px]">{!dropdown && <Lock />}</div>
    <div className="ml-[25px] w-[10px] h-[10px] rounded-full bg-[#dcdcdc]" />
  </div>
);

function Outliner() {
  return (
    <div className="h-[348px] rounded-[8px] bg-[#282828] overflow-hidden relative text-[#cfcfcf]">
      <div className="h-[58px] bg-[#303030] flex items-center pl-[17px]">
        <Btn cls="w-[71px]"><I s={34} vb="0 0 34 34"><rect x="2" y="1" width="12" height="7" fill="#ddd" stroke="none" /><path d="M8 8v22h8M8 20h8" /><rect x="17" y="15" width="16" height="7" fill="#ddd" stroke="none" /><rect x="17" y="26" width="16" height="7" fill="#ddd" stroke="none" /></I><Chev s={14} /></Btn>
        <Btn cls="w-[71px] ml-[13px]"><Picture s={34} /><Chev s={14} /></Btn>
        <div className="ml-[38px] flex-1 h-[45px] rounded-l-[9px] bg-[#272727] border border-[#3b3b3b] border-r-0 flex items-center pl-[10px] gap-[16px] text-[#7a7a7a]"><span className="text-[#cfcfcf]"><SearchI /></span>Search</div>
      </div>
      <div className="flex items-center h-[46px] mt-[4px] pl-[53px] text-[#bdbdbd]"><Box /><span className="ml-[14px]">Scene Collection</span></div>
      <div className="flex items-center h-[46px] pl-[58px] text-[#c8c8c8]">
        <Chev s={22} />
        <div className="ml-[13px] w-[45px] h-[41px] rounded-[8px] bg-[#4c4c4c] border border-[#5a5a5a] flex items-center justify-center text-[#e0e0e0]"><Box s={32} /></div>
        <span className="ml-[10px]">Collection</span>
        <div className="ml-auto mr-[27px] flex items-center gap-[16px]">
          <div className="w-[24px] h-[24px] rounded-[3px] bg-[#e6e6e6] flex items-center justify-center"><I s={18} vb="0 0 18 18"><path d="M3 9l4 5 8-10" stroke="#222" strokeWidth="3" /></I></div>
          <Eye /><Cam />
        </div>
      </div>
      <div className="flex items-center h-[46px] bg-[#334d80] pl-[111px] text-[#eea320] relative">
        <div className="absolute left-[67px] top-[12px] w-px h-[24px] bg-[#6a7ea4]" />
        <Chev dir="right" s={20} cls="text-[#c3cbdb]" />
        <div className="ml-[7px] w-[45px] h-[40px] rounded-[8px] bg-[#566f9d] flex items-center justify-center"><I s={34} vb="0 0 34 34"><path fillRule="evenodd" d="M2 2h30L17 32zM10 8l7 14 7-14z" fill="#c68b5b" stroke="none" /></I></div>
        <span className="ml-[10px]">Cube</span>
        <div className="ml-auto mr-[27px] flex items-center gap-[16px]"><Eye /><Cam ring="#334d80" /></div>
      </div>
      <div className="absolute left-[18px] bottom-[5px] w-[352px] h-[6px] rounded-full bg-[#3a3a3a]" />
    </div>
  );
}

const BlueI = ({ children }) => <span className="text-[#5680c2]">{children}</span>;

function Properties() {
  return (
    <div className="mt-[5px] h-[878px] rounded-[8px] bg-[#303030] overflow-hidden flex flex-col text-[#d6d6d6]">
      <div className="h-[58px] flex items-center pl-[18px] pb-[3px] shrink-0">
        <Btn cls="w-[71px]"><I s={34} vb="0 0 34 34"><rect x="1" y="2" width="32" height="13" rx="5" stroke="#ddd" strokeWidth="2" /><path d="M6 2h13v13H6a5 5 0 0 1-5-5V7a5 5 0 0 1 5-5z" fill="#ddd" stroke="none" /><rect x="1" y="19" width="32" height="13" rx="5" fill="#ddd" stroke="none" /><rect x="22" y="21" width="9" height="9" rx="3" fill="#333" stroke="none" /></I><Chev s={14} /></Btn>
        <div className="ml-[51px] w-[270px] shrink-0 h-[45px] rounded-[9px] bg-[#1d1d1d] border border-[#333] flex items-center pl-[10px] gap-[16px] text-[#7a7a7a]"><span className="text-[#cfcfcf]"><SearchI /></span>Search</div>
        <div className="ml-[36px] w-[30px] shrink-0 h-[45px] rounded-l-[9px] bg-[#2a2a2a] border border-[#3b3b3b]" />
      </div>
      <div className="flex flex-1 min-h-0">
        <div className="w-[67px] bg-[#1c1c1c] flex flex-col shrink-0 pt-[20px] text-[#b5b5b5] overflow-hidden">
          <SideIcon><I s={34} vb="0 0 34 34"><path d="M6 0v12M27 12v21M19 1v8c0 4 16 4 16 0V1l-5 1v7h-6V2z" /><rect x="1" y="17" width="11" height="15" rx="4" fill="#bbb" stroke="none" /><rect x="24" y="10" width="7" height="23" rx="3" fill="#bbb" stroke="none" /></I></SideIcon>
          <div className="h-[19px] shrink-0" />
          <SideIcon><I s={34} vb="0 0 34 34"><path d="M1 8h32v23H1zM12 8V3h10v5" fill="#b5b5b5" stroke="none" /><path d="M6 14h16M6 19h16M6 24h16" stroke="#444" strokeWidth="1.8" /><circle cx="28" cy="15" r="2" fill="#333" stroke="none" /><circle cx="28" cy="24" r="2" fill="#333" stroke="none" /></I></SideIcon>
          <div className="h-[3px] shrink-0" />
          <SideIcon><I s={34} vb="0 0 34 34"><path d="M1 3a3 3 0 0 1 3-3h26a3 3 0 0 1 3 3v10H27V7H7v6H1z" fill="#bbb" stroke="none" /><rect x="8" y="11" width="18" height="22" fill="#8f8f8f" stroke="none" /><path d="M17 17l7 13H10z" fill="#333" stroke="none" /></I></SideIcon>
          <div className="h-[2px] shrink-0" />
          <SideIcon><Picture s={34} /></SideIcon>
          <div className="h-[3px] shrink-0" />
          <SideIcon><I s={34} vb="0 0 34 34"><path d="M11 2l7 18-8 10H1z" fill="#aaa" stroke="none" /><circle cx="29" cy="6" r="4.5" fill="#aaa" stroke="none" /><circle cx="24" cy="25" r="8" strokeWidth="2" /><circle cx="24" cy="25" r="3" /></I></SideIcon>
          <div className="h-[2px] shrink-0" />
          <SideIcon><I s={34} vb="0 0 34 34"><circle cx="17" cy="17" r="13" stroke="#a84450" strokeWidth="2" /><path d="M5 20c5-10 10-2 14-10 3-4 7-3 9 0l1 10-10 8zM12 8c3-2 6-2 8-2" fill="#a84450" stroke="none" /><path d="M1 33l7-6M33 1l-6 6" stroke="#a84450" strokeWidth="2" /></I></SideIcon>
          <div className="h-[20px] shrink-0" />
          <SideIcon><Box outline /></SideIcon>
          <div className="h-[18px] shrink-0" />
          <SideIcon active><ObjIcon cls="text-[#e89a5c] -ml-[5px]" /></SideIcon>
          <div className="h-[2px] shrink-0" />
          <SideIcon><BlueI><FaWrench size={33} /></BlueI></SideIcon>
          <div className="h-[2px] shrink-0" />
          <SideIcon><I s={34} vb="0 0 34 34"><path d="M7 7h24M7 7v22M7 7l22 22" stroke="#5680c2" strokeWidth="2.4" /><circle cx="7" cy="7" r="6" fill="#5680c2" stroke="none" /><circle cx="30" cy="7" r="3.5" fill="#5680c2" stroke="none" /><circle cx="7" cy="29" r="3.5" fill="#5680c2" stroke="none" /><circle cx="29" cy="29" r="4.5" fill="#5680c2" stroke="none" /></I></SideIcon>
          <div className="h-[3px] shrink-0" />
          <SideIcon><I s={34} vb="0 0 34 34"><path d="M24 5A15 15 0 1 0 31 22" stroke="#5680c2" strokeWidth="2" /><circle cx="17" cy="17" r="7" fill="#5680c2" stroke="none" /><circle cx="30" cy="5" r="4.5" fill="#5680c2" stroke="none" /></I></SideIcon>
          <SideIcon><I s={34} vb="0 0 34 34"><path d="M2 20C4 12 22 2 32 2c3 4-6 22-12 26-6 4-20 2-18-8z" stroke="#5680c2" strokeWidth="2.6" /><circle cx="14" cy="21" r="7" stroke="#5680c2" strokeWidth="3" /></I></SideIcon>
        </div>
        <div className="relative flex-1 pl-[18px]">
          <div className="flex items-center h-[82px]">
            <span className="ml-[7px] text-[#dcdcdc]"><ObjIcon /></span>
            <span className="ml-[21px]">Cube</span>
            <PinIcon cls="ml-auto mr-[26px] text-[#a0a0a0]" />
          </div>
          <div className="mt-[19px] w-[357px] h-[45px] rounded-[9px] flex overflow-hidden border border-[#3b3b3b]">
            <div className="w-[71px] bg-[#2b2b2b] flex items-center justify-center gap-[4px] border-r border-[#444]"><ObjIcon /><Chev s={14} /></div>
            <div className="flex-1 bg-[#1d1d1d] flex items-center pl-[17px]">Cube</div>
          </div>
          <div className="mt-[23px] w-[358px] h-[646px] rounded-[9px] bg-[#3d3d3d]">
            <div className="flex items-center h-[60px] pl-[17px] text-[#dcdcdc]">
              <Chev s={22} /><span className="ml-[11px] [text-shadow:0_1px_2px_#000]">Transform</span>
              <div className="ml-auto mr-[17px] grid grid-cols-4 gap-[2px]">
                {[0, 1, 2, 3, 4, 5, 6, 7].map((i) => <div key={i} className="w-[5px] h-[5px] bg-[#111] border-t border-[#aaa]" />)}
              </div>
            </div>
            <div className="mt-[17px]">
              <PRow label="Locati..." value="0 m" pos="top" />
              <PRow label="Y" value="0 m" mt={2} />
              <PRow label="Z" value="0 m" pos="bot" mt={2} />
              <PRow label="Rotati..." value="0°" pos="top" mt={14} />
              <PRow label="Y" value="0°" mt={2} />
              <PRow label="Z" value="0°" pos="bot" mt={2} />
              <PRow label="Mode" dropdown mt={14} />
              <PRow label="Scale X" value="1.0" pos="top" mt={14} />
              <PRow label="Y" value="1.0" mt={2} />
              <PRow label="Z" value="1.0" pos="bot" mt={2} />
            </div>
            <div className="flex items-center mt-[37px] pl-[51px] text-[#dcdcdc]"><Chev dir="right" s={22} /><span className="ml-[9px] [text-shadow:0_1px_2px_#000] whitespace-nowrap">Delta Transform</span></div>
          </div>
          <div className="absolute right-[5px] top-[22px] w-[8px] h-[487px] rounded-full bg-[#3d3d3d]" />
        </div>
      </div>
    </div>
  );
}

export default function App() {
  return (
    <div className="relative w-[2687px] h-[1397px] overflow-hidden flex flex-col bg-[#181818] font-['Inter',sans-serif] text-[25.7px] leading-none text-[#d8d8d8]">
      <div className="h-[54px] bg-[#202020] flex items-center shrink-0 font-['Open_Sans',sans-serif] text-[#e8e8e8]">
        <div className="relative ml-[5px] w-[34px] h-[30px]">
          <SiBlender size={32} className="text-[#ea7600]" />
          <div className="absolute left-[14px] top-[10px] w-[13px] h-[13px] rounded-full bg-white" />
          <div className="absolute left-[17px] top-[13px] w-[7px] h-[7px] rounded-full bg-[#265787]" />
        </div>
        <span className="ml-[11px] text-[26.3px] whitespace-nowrap">* (Unsaved) - Blender 4.2</span>
        <div className="ml-auto flex items-center">
          <div className="w-[21px] h-px bg-[#f0f0f0] mr-[85px]" />
          <I s={22} vb="0 0 22 22" cls="mr-[87px]"><rect x="1" y="5" width="15" height="16" rx="2" stroke="#f0f0f0" /><path d="M5 5V3a2 2 0 0 1 2-2h12a2 2 0 0 1 2 2v13a2 2 0 0 1-2 2h-3" stroke="#f0f0f0" /></I>
          <X s={21} cls="text-[#f0f0f0] mr-[47px]" />
        </div>
      </div>

      <div className="h-[61px] flex items-stretch shrink-0">
        <div className="flex items-center h-full pl-[22px] pb-[2px] w-[606px] shrink-0 text-[#dcdcdc]">
          <SiBlender size={36} className="text-[#e0e0e0]" />
          <Menu cls="ml-[23px]" items={[["File", 0], ["Edit", 37], ["Render", 33], ["Window", 37], ["Help", 34]]} />
        </div>
        <div className="flex items-end pb-[2px] text-[#9c9c9c]">
          {[["Layout", 128], ["Modeling", 159], ["Sculpting", 160], ["UV Editing", 172], ["Texture Paint", 208], ["Shading", 144], ["Animation", 166], ["Rendering", 147]].map(([t, w]) => (
            <div key={t} className="h-[50px] pl-[22px] rounded-t-[8px] bg-[#1c1c1c] flex items-center whitespace-nowrap shrink-0 border-r border-[#181818] overflow-hidden" style={{ width: w }}>{t}</div>
          ))}
        </div>
        <div className="absolute left-[1913px] top-[61px] flex h-[46px] w-[394px] rounded-[9px] overflow-hidden border border-[#3b3b3b] bg-[#3d3d3d]">
          <div className="w-[70px] bg-[#272727] flex items-center justify-center gap-[2px] border-r border-[#444]"><I s={34} vb="0 0 34 34"><path d="M10 3L3 22a7 7 0 0 0 14 2z" fill="#e6e6e6" stroke="none" /><circle cx="22" cy="5" r="4.5" fill="#e6e6e6" stroke="none" /><circle cx="23" cy="24" r="8" strokeWidth="2" /><circle cx="23" cy="24" r="3" /></I><Chev s={12} /></div>
          <div className="w-[236px] bg-[#1d1d1d] flex items-center justify-between pl-[18px] pr-[14px] text-[#e4e4e4]"><span>Scene</span><PinIcon cls="text-[#8a8a8a]" /></div>
          <div className="w-[41px] bg-[#565656] flex items-center justify-center text-[#ddd]"><CopyI /></div>
          <div className="flex-1 flex items-center justify-center text-[#777]"><X /></div>
        </div>
        <div className="absolute left-[2320px] top-[61px] flex h-[46px] w-[349px] rounded-[9px] overflow-hidden border border-[#3b3b3b] bg-[#3d3d3d]">
          <div className="w-[71px] bg-[#272727] flex items-center justify-center gap-[2px] border-r border-[#444]"><Picture s={34} /><Chev s={14} /></div>
          <div className="w-[185px] bg-[#1d1d1d] flex items-center pl-[17px] text-[#e4e4e4]">ViewLayer</div>
          <div className="w-[45px] bg-[#565656] flex items-center justify-center text-[#ddd]"><CopyI /></div>
          <div className="flex-1 flex items-center justify-center text-[#777]"><X /></div>
        </div>
      </div>

      <div className="flex-1 flex pt-[2px] pl-[2px] min-h-0">
        <div className="w-[2216px] flex flex-col shrink-0">
          <div className="flex gap-[4px]">
            <Spreadsheet />
            <Viewport />
          </div>
          <NodeEditor />
          <Timeline />
        </div>
        <div className="ml-[4px] w-[463px] flex flex-col shrink-0">
          <Outliner />
          <Properties />
        </div>
      </div>

      <div className="h-[49px] shrink-0 flex items-center text-[#8e8e8e] relative">
        <div className="flex items-center ml-[29px]"><Mouse part="l" /><span className="ml-[11px]">Select</span></div>
        <div className="flex items-center ml-[380px]"><Mouse part="m" /></div>
        <div className="flex items-center ml-[468px]"><Mouse part="r" /><span className="ml-[10px]">Mute Links</span></div>
        <div className="ml-auto mr-[33px] flex items-center">
          <I s={34} vb="0 0 34 34"><circle cx="17" cy="17" r="15" stroke="#666" /><ellipse cx="17" cy="17" rx="7" ry="15" stroke="#666" /><path d="M2 17h30M5 9h24M5 25h24" stroke="#666" /><path d="M2 1l30 32" stroke="#888" strokeWidth="2.5" /></I>
          <div className="ml-[17px] w-[2px] h-[30px] bg-[#777]" />
          <span className="ml-[12px]">4.2.0</span>
        </div>
      </div>
    </div>
  );
}
